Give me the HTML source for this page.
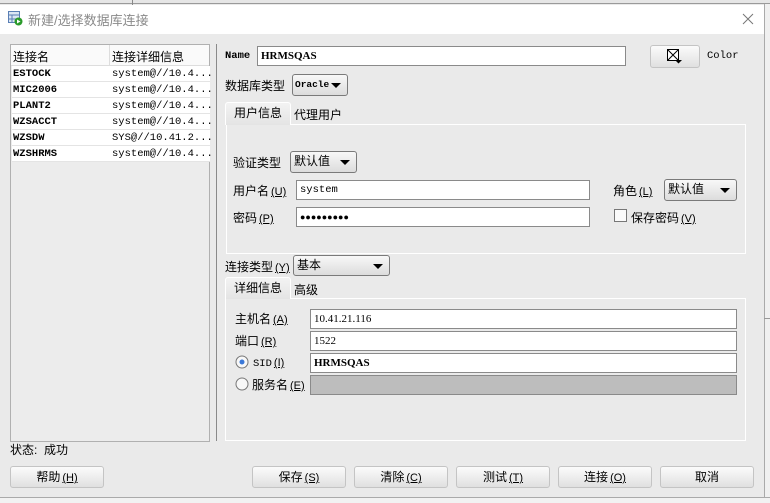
<!DOCTYPE html>
<html><head><meta charset="utf-8"><style>
*{margin:0;padding:0;box-sizing:border-box}
body{width:770px;height:503px;background:#eaeaea;position:relative;overflow:hidden;font-family:"Liberation Sans","Noto Sans CJK SC",sans-serif;font-size:12px;color:#000}
.a{position:absolute;white-space:nowrap}
.mono{font-family:"Liberation Mono","Noto Sans CJK SC",monospace;font-size:10.5px;font-weight:bold}
.inp{position:absolute;background:#fff;border:1px solid #8a8a8a;padding-left:3px;line-height:18px;font-family:"Liberation Serif",serif;font-size:11px}
.dd{position:absolute;border:1px solid #7a7a7a;border-radius:3px;background:linear-gradient(#f8f8f8,#dcdcdc);padding-left:3px;line-height:19px}
.dd:after{content:"";position:absolute;right:6px;top:8px;border-left:5px solid transparent;border-right:5px solid transparent;border-top:5px solid #000}
.btn{position:absolute;height:22px;border:1px solid #c4c4c4;border-radius:3px;background:linear-gradient(#fbfbfb,#e0e0e0);text-align:center;line-height:20px}
.row{position:absolute;left:1px;width:198px;height:16px;background:#fff;border-bottom:1px solid #e4e4e4}
.row span{position:absolute;top:2px}
.u{text-decoration:underline;font-size:11px;margin-left:2px}
</style></head><body>
<div class="a" style="left:0;top:0;width:770px;height:4px;background:#e6e6e6;border-bottom:1px solid #9a9a9a"></div>
<div class="a" style="left:132px;top:0;width:1px;height:5px;background:#888"></div>
<div class="a" style="left:764px;top:4px;width:6px;height:499px;background:#f0f0f0;border-left:1px solid #aaa"></div>
<div class="a" style="left:764px;top:318px;width:6px;height:1px;background:#999"></div>
<div class="a" style="left:0;top:497px;width:770px;height:6px;background:#f2f2f2;border-top:1px solid #aaa"></div>
<!-- title -->
<div class="a" style="left:0;top:5px;width:764px;height:29px;background:#fff"></div>
<svg class="a" style="left:8px;top:11px" width="15" height="15"><rect x="0.5" y="0.5" width="11" height="11" fill="#dbe6f4" stroke="#5a7fb5"/><line x1="0" y1="4" x2="12" y2="4" stroke="#5a7fb5"/><line x1="0" y1="8" x2="12" y2="8" stroke="#5a7fb5"/><line x1="4" y1="4" x2="4" y2="12" stroke="#5a7fb5"/><circle cx="10.5" cy="10.5" r="4" fill="#2a9a2a"/><path d="M9 8.5 L12.5 10.5 L9 12.5Z" fill="#fff"/></svg>
<div class="a" style="left:28px;top:10px;font-size:13px;color:#8a8a8a">新建/选择数据库连接</div>
<svg class="a" style="left:742px;top:13px" width="12" height="12"><path d="M1 1L11 11M11 1L1 11" stroke="#777" stroke-width="1"/></svg>
<!-- list -->
<div class="a" style="left:10px;top:44px;width:200px;height:398px;border:1px solid #b0b0b0;background:#ececec">
<div class="a" style="left:0;top:0;width:198px;height:21px;background:#fafafa;border-bottom:1px solid #ddd"></div>
<div class="a" style="left:98px;top:0;width:1px;height:117px;background:#ddd"></div>
<div class="a" style="left:2px;top:3px;font-size:12px">连接名</div>
<div class="a" style="left:101px;top:3px;font-size:12px">连接详细信息</div>
<div class="row" style="top:21px"><span class="mono" style="left:1px">ESTOCK</span><span class="mono" style="left:100px;font-weight:normal">system@//10.4...</span></div>
<div class="row" style="top:37px"><span class="mono" style="left:1px">MIC2006</span><span class="mono" style="left:100px;font-weight:normal">system@//10.4...</span></div>
<div class="row" style="top:53px"><span class="mono" style="left:1px">PLANT2</span><span class="mono" style="left:100px;font-weight:normal">system@//10.4...</span></div>
<div class="row" style="top:69px"><span class="mono" style="left:1px">WZSACCT</span><span class="mono" style="left:100px;font-weight:normal">system@//10.4...</span></div>
<div class="row" style="top:85px"><span class="mono" style="left:1px">WZSDW</span><span class="mono" style="left:100px;font-weight:normal">SYS@//10.41.2...</span></div>
<div class="row" style="top:101px"><span class="mono" style="left:1px">WZSHRMS</span><span class="mono" style="left:100px;font-weight:normal">system@//10.4...</span></div>
</div>
<div class="a" style="left:216px;top:44px;width:1px;height:397px;background:#8a8a8a"></div>
<!-- name -->
<div class="a mono" style="left:225px;top:50px">Name</div>
<div class="inp" style="left:257px;top:46px;width:369px;height:20px;font-weight:bold">HRMSQAS</div>
<div class="btn" style="left:650px;top:45px;width:50px;height:23px"></div>
<svg class="a" style="left:667px;top:49px" width="16" height="15"><rect x="0.5" y="0.5" width="11" height="11" fill="#fff" stroke="#000"/><path d="M0.5 0.5L11.5 11.5M11.5 0.5L0.5 11.5" stroke="#000"/><path d="M8 11H15L11.5 14.5Z" fill="#000"/></svg>
<div class="a mono" style="left:707px;top:50px;font-weight:normal">Color</div>
<div class="a" style="left:225px;top:77px">数据库类型</div>
<div class="dd mono" style="left:292px;top:74px;width:56px;height:22px;line-height:20px;font-size:9.5px;padding-left:2px">Oracle</div>
<!-- tab 1 -->
<div class="a" style="left:226px;top:124px;width:520px;height:130px;border:1px solid #fff"></div>
<div class="a" style="left:225px;top:102px;width:66px;height:23px;border:1px solid #fff;border-bottom:none;border-radius:3px 3px 0 0;background:linear-gradient(#f3f3f3,#e4e4e4);text-align:center;line-height:21px">用户信息</div>
<div class="a" style="left:294px;top:106px">代理用户</div>
<div class="a" style="left:233px;top:154px">验证类型</div>
<div class="dd" style="left:290px;top:151px;width:67px;height:22px">默认值</div>
<div class="a" style="left:233px;top:182px">用户名<span class="u">(U)</span></div>
<div class="inp mono" style="left:296px;top:180px;width:294px;height:20px;font-family:'Liberation Mono',monospace;font-weight:normal;font-size:10.5px">system</div>
<div class="a" style="left:613px;top:182px">角色<span class="u">(L)</span></div>
<div class="dd" style="left:664px;top:179px;width:73px;height:22px">默认值</div>
<div class="a" style="left:233px;top:209px">密码<span class="u">(P)</span></div>
<div class="inp" style="left:296px;top:207px;width:294px;height:20px;font-size:9px;letter-spacing:0px">●●●●●●●●●</div>
<div class="a" style="left:614px;top:209px;width:13px;height:13px;border:1px solid #777;background:#fafafa"></div>
<div class="a" style="left:631px;top:209px">保存密码<span class="u">(V)</span></div>
<!-- conn type -->
<div class="a" style="left:225px;top:258px">连接类型<span class="u">(Y)</span></div>
<div class="dd" style="left:293px;top:255px;width:97px;height:21px">基本</div>
<div class="a" style="left:225px;top:298px;width:521px;height:143px;border:1px solid #fff"></div>
<div class="a" style="left:225px;top:277px;width:66px;height:22px;border:1px solid #fff;border-bottom:none;border-radius:3px 3px 0 0;background:linear-gradient(#f3f3f3,#e4e4e4);text-align:center;line-height:20px">详细信息</div>
<div class="a" style="left:294px;top:281px">高级</div>
<div class="a" style="left:235px;top:310px">主机名<span class="u">(A)</span></div>
<div class="inp" style="left:310px;top:309px;width:427px;height:20px">10.41.21.116</div>
<div class="a" style="left:235px;top:332px">端口<span class="u">(R)</span></div>
<div class="inp" style="left:310px;top:331px;width:427px;height:20px">1522</div>
<svg class="a" style="left:235px;top:355px" width="14" height="14"><circle cx="7" cy="7" r="6" fill="#f8f8f8" stroke="#777"/><circle cx="7" cy="7" r="2.5" fill="#3a78d8"/></svg>
<div class="a" style="left:253px;top:355px"><span class="mono" style="font-weight:normal">SID</span><span class="u">(I)</span></div>
<div class="inp" style="left:310px;top:353px;width:427px;height:20px;font-weight:bold">HRMSQAS</div>
<svg class="a" style="left:235px;top:377px" width="14" height="14"><circle cx="7" cy="7" r="6" fill="#f8f8f8" stroke="#777"/></svg>
<div class="a" style="left:252px;top:376px">服务名<span class="u">(E)</span></div>
<div class="inp" style="left:310px;top:375px;width:427px;height:20px;background:#bdbdbd"></div>
<!-- bottom -->
<div class="a" style="left:10px;top:441px">状态:&nbsp;&nbsp;成功</div>
<div class="btn" style="left:10px;top:466px;width:94px">帮助<span class="u">(H)</span></div>
<div class="btn" style="left:252px;top:466px;width:94px">保存<span class="u">(S)</span></div>
<div class="btn" style="left:354px;top:466px;width:94px">清除<span class="u">(C)</span></div>
<div class="btn" style="left:456px;top:466px;width:94px">测试<span class="u">(T)</span></div>
<div class="btn" style="left:558px;top:466px;width:94px">连接<span class="u">(O)</span></div>
<div class="btn" style="left:660px;top:466px;width:94px">取消</div>
</body></html>
